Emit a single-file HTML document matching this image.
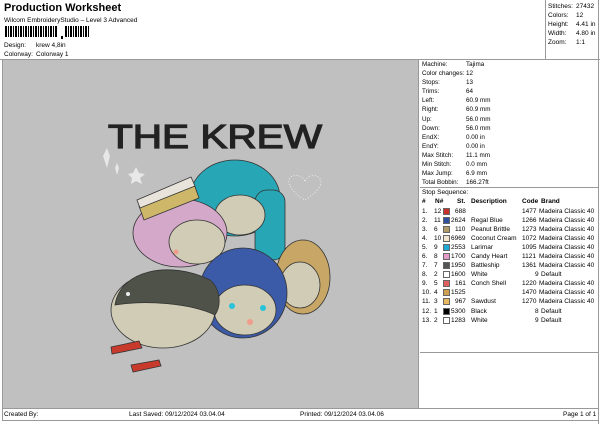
<!DOCTYPE html>
<html><head><meta charset="utf-8"><style>
*{margin:0;padding:0;box-sizing:border-box}
body{width:600px;height:424px;background:#fff;font-family:"Liberation Sans",Arial,sans-serif;font-size:7px;color:#000;position:relative;overflow:hidden}
.a{position:absolute;white-space:nowrap}
.sw{display:inline-block;width:7px;height:7px;border:1px solid #666;vertical-align:-1px}
</style></head><body>
<div class="a" style="left:4px;top:2px;font-size:11px;font-weight:bold">Production Worksheet</div>
<div class="a" style="left:4px;top:17px;font-size:6.5px">Wilcom EmbroideryStudio – Level 3 Advanced</div>
<svg class="a" style="left:5px;top:26px" width="85" height="14">
<g fill="#000">
<rect x="0" y="0" width="2" height="11"/><rect x="3" y="0" width="1" height="11"/><rect x="5" y="0" width="2" height="11"/><rect x="8" y="0" width="1" height="11"/><rect x="10" y="0" width="2" height="11"/><rect x="13" y="0" width="1" height="11"/><rect x="15" y="0" width="2" height="11"/><rect x="18" y="0" width="1" height="11"/><rect x="20" y="0" width="2" height="11"/><rect x="23" y="0" width="1" height="11"/><rect x="25" y="0" width="2" height="11"/><rect x="28" y="0" width="1" height="11"/><rect x="30" y="0" width="2" height="11"/><rect x="33" y="0" width="1" height="11"/><rect x="35" y="0" width="2" height="11"/><rect x="38" y="0" width="1" height="11"/><rect x="40" y="0" width="2" height="11"/><rect x="43" y="0" width="1" height="11"/><rect x="45" y="0" width="2" height="11"/><rect x="48" y="0" width="1" height="11"/><rect x="50" y="0" width="2" height="11"/>
<rect x="56" y="10" width="2" height="3"/>
<rect x="60" y="0" width="2" height="11"/><rect x="63" y="0" width="1" height="11"/><rect x="65" y="0" width="2" height="11"/><rect x="68" y="0" width="1" height="11"/><rect x="70" y="0" width="2" height="11"/><rect x="73" y="0" width="1" height="11"/><rect x="75" y="0" width="2" height="11"/><rect x="78" y="0" width="1" height="11"/><rect x="80" y="0" width="2" height="11"/><rect x="83" y="0" width="1" height="11"/>
</g></svg>
<div class="a" style="left:4px;top:42px;font-size:6.5px">Design:</div><div class="a" style="left:36px;top:42px;font-size:6.5px">krew 4,8in</div>
<div class="a" style="left:4px;top:51px;font-size:6.5px">Colorway:</div><div class="a" style="left:36px;top:51px;font-size:6.5px">Colorway 1</div>

<div class="a" style="left:545px;top:0;width:54px;height:60px;border-left:1px solid #999;font-size:6.5px;line-height:9px;padding:2px 0 0 2px">
<div>Stitches:<span style="position:absolute;left:30px">27432</span></div>
<div>Colors:<span style="position:absolute;left:30px">12</span></div>
<div>Height:<span style="position:absolute;left:30px">4.41 in</span></div>
<div>Width:<span style="position:absolute;left:30px">4.80 in</span></div>
<div>Zoom:<span style="position:absolute;left:30px">1:1</span></div>
</div>
<div class="a" style="left:0;top:59px;width:600px;height:1px;background:#999"></div>
<div class="a" style="left:598px;top:0;width:1px;height:424px;background:#999"></div>
<div class="a" style="left:2px;top:59px;width:1px;height:362px;background:#999"></div>

<div class="a" style="left:3px;top:60px;width:416px;height:348px;background:#c0c0c0;border-right:1px solid #999"></div>

<svg class="a" style="left:3px;top:60px" width="416" height="348">
<text x="105" y="88" font-family="Liberation Sans, sans-serif" font-size="33" fill="#222" stroke="#222" stroke-width="1.2" textLength="214" lengthAdjust="spacingAndGlyphs">THE KREW</text>
<g fill="#eee" opacity="0.85"><path d="M100 96 l4 -8 l3 8 l-3 12 z"/><path d="M112 108 l2 -5 l2 5 l-2 7z"/><path d="M130 113 l3 -6 l3 6 l6 1 l-5 4 l2 6 l-6 -3 l-5 3 l1 -6 l-4 -4z"/></g>
<path d="M287 125 c-6 -10 12 -14 15 -3 c3 -11 20 -7 15 4 c-3 7 -15 14 -15 14 c0 0 -12 -6 -15 -15z" fill="none" stroke="#eee" stroke-dasharray="1 2"/>
<g stroke="#333" stroke-width="0.8">
<ellipse cx="232" cy="138" rx="45" ry="38" fill="#27a6b6"/>
<rect x="252" y="130" width="30" height="70" rx="12" fill="#27a6b6"/>
<ellipse cx="237" cy="155" rx="25" ry="20" fill="#d0ccb6"/>
<ellipse cx="177" cy="173" rx="47" ry="34" fill="#d4a8c8"/>
<ellipse cx="194" cy="182" rx="28" ry="22" fill="#d0ccb6"/>
<path d="M136 146 l55 -22 l5 14 l-55 22 z" fill="#cfb76a"/>
<path d="M134 140 l54 -23 l4 9 l-55 22 z" fill="#e8e4dc"/>
<ellipse cx="300" cy="217" rx="27" ry="37" fill="#c8a766"/>
<ellipse cx="297" cy="225" rx="20" ry="23" fill="#d0ccb6"/>
<ellipse cx="240" cy="233" rx="44" ry="45" fill="#3b5ba8"/>
<ellipse cx="242" cy="250" rx="31" ry="25" fill="#d0ccb6"/>
<ellipse cx="160" cy="250" rx="52" ry="38" fill="#d0ccb6"/>
<path d="M112 245 c5 -35 55 -45 95 -25 c10 8 12 25 5 35 c-25 -12 -70 -15 -100 -10z" fill="#4f5249"/>
<path d="M108 287 l28 -6 l3 7 l-30 6z" fill="#c83a2c"/>
<path d="M128 305 l28 -5 l2 6 l-28 6z" fill="#c83a2c"/>
</g>
<circle cx="125" cy="234" r="2" fill="#eee"/>
<circle cx="173" cy="192" r="2.5" fill="#f19c8c"/>
<circle cx="247" cy="262" r="3" fill="#f19c8c"/>
<circle cx="229" cy="246" r="3" fill="#28c3d8"/><circle cx="260" cy="248" r="3" fill="#28c3d8"/>
</svg>

<div class="a" style="left:420px;top:60px;width:178px;font-size:6.3px;line-height:9.1px;padding:0 0 0 2px">
<div>Machine:<span style="position:absolute;left:46px">Tajima</span></div>
<div>Color changes:<span style="position:absolute;left:46px">12</span></div>
<div>Stops:<span style="position:absolute;left:46px">13</span></div>
<div>Trims:<span style="position:absolute;left:46px">64</span></div>
<div>Left:<span style="position:absolute;left:46px">60.9 mm</span></div>
<div>Right:<span style="position:absolute;left:46px">60.9 mm</span></div>
<div>Up:<span style="position:absolute;left:46px">56.0 mm</span></div>
<div>Down:<span style="position:absolute;left:46px">56.0 mm</span></div>
<div>EndX:<span style="position:absolute;left:46px">0.00 in</span></div>
<div>EndY:<span style="position:absolute;left:46px">0.00 in</span></div>
<div>Max Stitch:<span style="position:absolute;left:46px">11.1 mm</span></div>
<div>Min Stitch:<span style="position:absolute;left:46px">0.0 mm</span></div>
<div>Max Jump:<span style="position:absolute;left:46px">6.9 mm</span></div>
<div>Total Bobbin:<span style="position:absolute;left:46px">166.27ft</span></div>
</div>
<div class="a" style="left:420px;top:187px;width:178px;height:1px;background:#999"></div>
<div class="a" style="left:422px;top:189px;font-size:6.5px">Stop Sequence:</div>
<div class="a" style="left:420px;top:352px;width:178px;height:1px;background:#999"></div>

<div class="a" style="left:422px;top:197px;font-size:6.5px;line-height:9px;width:176px">
<div style="font-weight:bold;text-decoration:underline;position:relative;height:9px"><span class="a" style="left:0">#</span><span class="a" style="left:13px">N#</span><span class="a" style="left:35px">St.</span><span class="a" style="left:49px">Description</span><span class="a" style="left:100px">Code</span><span class="a" style="left:119px">Brand</span></div>
</div>
<div class="a" style="left:422px;top:207px;font-size:6.5px;line-height:9.05px;width:176px">
<div style="position:relative;height:9.05px"><span class="a">1.</span><span class="a" style="left:12px">12</span><span class="a sw" style="left:21px;top:1px;background:#c8302a"></span><span class="a" style="left:33px">688</span><span class="a" style="left:100px">1477</span><span class="a" style="left:117px">Madeira Classic 40</span></div>
<div style="position:relative;height:9.05px"><span class="a">2.</span><span class="a" style="left:12px">11</span><span class="a sw" style="left:21px;top:1px;background:#2d4fa0"></span><span class="a" style="left:29px">2624</span><span class="a" style="left:49px">Regal Blue</span><span class="a" style="left:100px">1266</span><span class="a" style="left:117px">Madeira Classic 40</span></div>
<div style="position:relative;height:9.05px"><span class="a">3.</span><span class="a" style="left:12px">6</span><span class="a sw" style="left:21px;top:1px;background:#b09a68"></span><span class="a" style="left:33px">110</span><span class="a" style="left:49px">Peanut Brittle</span><span class="a" style="left:100px">1273</span><span class="a" style="left:117px">Madeira Classic 40</span></div>
<div style="position:relative;height:9.05px"><span class="a">4.</span><span class="a" style="left:12px">10</span><span class="a sw" style="left:21px;top:1px;background:#f2e6d0"></span><span class="a" style="left:29px">6969</span><span class="a" style="left:49px">Coconut Cream</span><span class="a" style="left:100px">1072</span><span class="a" style="left:117px">Madeira Classic 40</span></div>
<div style="position:relative;height:9.05px"><span class="a">5.</span><span class="a" style="left:12px">9</span><span class="a sw" style="left:21px;top:1px;background:#1ea8d6"></span><span class="a" style="left:29px">2553</span><span class="a" style="left:49px">Larimar</span><span class="a" style="left:100px">1095</span><span class="a" style="left:117px">Madeira Classic 40</span></div>
<div style="position:relative;height:9.05px"><span class="a">6.</span><span class="a" style="left:12px">8</span><span class="a sw" style="left:21px;top:1px;background:#e29ac6"></span><span class="a" style="left:29px">1700</span><span class="a" style="left:49px">Candy Heart</span><span class="a" style="left:100px">1121</span><span class="a" style="left:117px">Madeira Classic 40</span></div>
<div style="position:relative;height:9.05px"><span class="a">7.</span><span class="a" style="left:12px">7</span><span class="a sw" style="left:21px;top:1px;background:#555"></span><span class="a" style="left:29px">1950</span><span class="a" style="left:49px">Battleship</span><span class="a" style="left:100px">1361</span><span class="a" style="left:117px">Madeira Classic 40</span></div>
<div style="position:relative;height:9.05px"><span class="a">8.</span><span class="a" style="left:12px">2</span><span class="a sw" style="left:21px;top:1px;background:#fff"></span><span class="a" style="left:29px">1600</span><span class="a" style="left:49px">White</span><span class="a" style="left:113px">9</span><span class="a" style="left:119px">Default</span></div>
<div style="position:relative;height:9.05px"><span class="a">9.</span><span class="a" style="left:12px">5</span><span class="a sw" style="left:21px;top:1px;background:#e06060"></span><span class="a" style="left:33px">161</span><span class="a" style="left:49px">Conch Shell</span><span class="a" style="left:100px">1220</span><span class="a" style="left:117px">Madeira Classic 40</span></div>
<div style="position:relative;height:9.05px"><span class="a">10.</span><span class="a" style="left:12px">4</span><span class="a sw" style="left:21px;top:1px;background:#d0a050"></span><span class="a" style="left:29px">1525</span><span class="a" style="left:100px">1470</span><span class="a" style="left:117px">Madeira Classic 40</span></div>
<div style="position:relative;height:9.05px"><span class="a">11.</span><span class="a" style="left:12px">3</span><span class="a sw" style="left:21px;top:1px;background:#e8b860"></span><span class="a" style="left:33px">967</span><span class="a" style="left:49px">Sawdust</span><span class="a" style="left:100px">1270</span><span class="a" style="left:117px">Madeira Classic 40</span></div>
<div style="position:relative;height:9.05px"><span class="a">12.</span><span class="a" style="left:12px">1</span><span class="a sw" style="left:21px;top:1px;background:#000"></span><span class="a" style="left:29px">5300</span><span class="a" style="left:49px">Black</span><span class="a" style="left:113px">8</span><span class="a" style="left:119px">Default</span></div>
<div style="position:relative;height:9.05px"><span class="a">13.</span><span class="a" style="left:12px">2</span><span class="a sw" style="left:21px;top:1px;background:#fff"></span><span class="a" style="left:29px">1283</span><span class="a" style="left:49px">White</span><span class="a" style="left:113px">9</span><span class="a" style="left:119px">Default</span></div>
</div>

<div class="a" style="left:2px;top:408px;width:597px;height:1px;background:#999"></div>
<div class="a" style="left:2px;top:420px;width:597px;height:1px;background:#999"></div>
<div class="a" style="left:4px;top:411px;font-size:6.5px">Created By:</div>
<div class="a" style="left:129px;top:411px;font-size:6.5px">Last Saved: 09/12/2024 03.04.04</div>
<div class="a" style="left:300px;top:411px;font-size:6.5px">Printed: 09/12/2024 03.04.06</div>
<div class="a" style="left:563px;top:411px;font-size:6.5px">Page 1 of 1</div>
</body></html>
